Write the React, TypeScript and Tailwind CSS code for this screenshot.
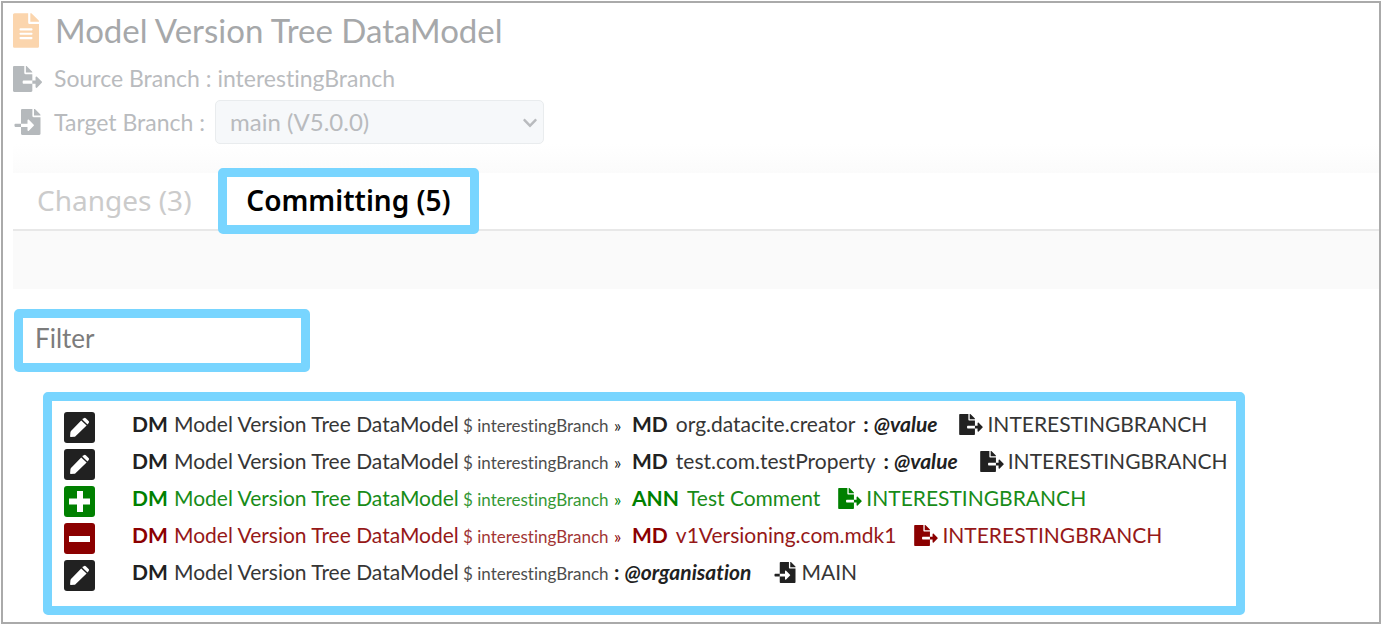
import { FaChevronDown, FaFileAlt, FaFileExport, FaFileImport } from "react-icons/fa";

type Kind = "edit" | "add" | "remove";

interface Change {
  kind: Kind;
  type?: string;
  label?: string;
  property?: string;
  branch: string;
  imported?: boolean;
}

const changes: Change[] = [
  { kind: "edit", type: "MD", label: "org.datacite.creator", property: "@value", branch: "INTERESTINGBRANCH" },
  { kind: "edit", type: "MD", label: "test.com.testProperty", property: "@value", branch: "INTERESTINGBRANCH" },
  { kind: "add", type: "ANN", label: "Test Comment", branch: "INTERESTINGBRANCH" },
  { kind: "remove", type: "MD", label: "v1Versioning.com.mdk1", branch: "INTERESTINGBRANCH" },
  { kind: "edit", property: "@organisation", branch: "MAIN", imported: true },
];

const colours: Record<Kind, string> = {
  edit: "text-[#212121]",
  add: "text-[#008000]",
  remove: "text-[#8b0000]",
};

function KindIcon({ kind }: { kind: Kind }) {
  return (
    <svg viewBox="0 0 31 31" className="size-[31px] shrink-0" role="img" aria-label={kind}>
      <rect width="31" height="31" rx="3" fill="currentColor" />
      {kind === "edit" && (
        <g fill="#fff">
          <path d="M17.2 8.4 22.6 13.5 11.5 24.2 Q11 24.7 10.3 24.7 L6.8 25 Q6 25 6.1 24.2 L6.4 20.4 Q6.4 19.7 7 19.1Z" />
          <path d="M18.3 7.5 19.8 6.2 Q20.9 5.4 22 6.4 L24.6 8.9 Q25.6 10 24.7 11.1 L23.5 12.5Z" />
        </g>
      )}
      {kind === "add" && <path fill="#fff" d="M13 5h6v7.5h7v6h-7V26h-6v-7.500H5v-6h8z" />}
      {kind === "remove" && <path fill="#fff" d="M5 13h21v6H5z" />}
    </svg>
  );
}

function ChangeRow({ change }: { change: Change }) {
  const Icon = change.imported ? FaFileImport : FaFileExport;
  return (
    <li className={`flex h-[37px] items-center text-[21px] leading-7 whitespace-nowrap ${colours[change.kind]}`}>
      <KindIcon kind={change.kind} />
      <div className="mb-[6px] ml-[37px] flex items-baseline">
        <span className="w-[42px] font-bold">DM</span>
        <span className="w-[289px] opacity-90">Model Version Tree DataModel</span>
        <span className="w-[151px] text-[17px] opacity-80">$ interestingBranch</span>
        {change.type && (
          <>
            <span className="w-[18px] text-[17px]">»</span>
            <span className="mr-2 font-bold">{change.type}</span>
            <span className="mr-2 opacity-90">{change.label}</span>
          </>
        )}
        {change.property && (
          <span className="mr-3 font-bold">
            : <i>{change.property}</i>
          </span>
        )}
        <span className="ml-[10px]">
          <Icon className="mr-1 mb-1 inline-block h-[21px] w-6 align-middle" />
          <span className="opacity-90">{change.branch}</span>
        </span>
      </div>
    </li>
  );
}

export default function App() {
  return (
    <div className="min-h-screen bg-white py-px pr-[2px] pl-px font-['Lato',sans-serif] [font-variant-ligatures:none]">
      <main className="flex min-h-[calc(100vh-2px)] flex-col border-2 border-[#aaaaaa] bg-white">
        <header className="pl-[10px] text-[23px] text-[#b9bbbe]">
          <div className="flex h-[54px] items-center gap-4">
            <FaFileAlt className="h-[35px] w-[26px] text-[#fbd5ad]" />
            <h1 className="text-[33px] leading-10 text-[#a6a8aa]">Model Version Tree DataModel</h1>
          </div>
          <div className="flex h-[43px] items-center gap-3">
            <FaFileExport className="h-[26px] w-[29px] text-[#b5b9bc]" />
            <p>Source Branch : interestingBranch</p>
          </div>
          <div className="flex h-11 items-center gap-3">
            <FaFileImport className="h-[26px] w-[29px] text-[#b5b9bc]" />
            <div className="flex items-center">
              <label htmlFor="target" className="w-[161px] whitespace-nowrap">Target Branch :</label>
              <div className="relative w-[329px]">
                <select
                  id="target"
                  className="h-11 w-full appearance-none rounded-[5px] border border-[#e9ecee] bg-[#f6f8fa] px-[14px] text-[24px]"
                >
                  <option>main (V5.0.0)</option>
                </select>
                <FaChevronDown className="pointer-events-none absolute top-[15px] right-[6px] size-4" />
              </div>
            </div>
          </div>
        </header>

        <div className="ml-[10px] h-[29px] bg-linear-to-b from-white to-[#fbfbfb]" />

        <nav
          className="relative z-10 ml-[10px] flex h-[58px] items-center border-b-2 border-[#e8e8e8] font-['Noto_Sans',sans-serif] text-[28px]"
          role="tablist"
        >
          <button role="tab" className="w-[205px] pb-[2px] pl-6 text-left text-[#cbcbcb]">Changes (3)</button>
          <button
            role="tab"
            aria-selected="true"
            className="h-[66px] w-[261px] shrink-0 rounded-[5px] border-[9px] border-[#78d5ff] bg-white pb-[2px] font-semibold text-black"
          >
            Committing (5)
          </button>
        </nav>

        <div className="ml-[10px] h-[58px] bg-[#fafafa]" />

        <section className="pt-5 pl-[11px]">
          <input
            type="text"
            placeholder="Filter"
            aria-label="Filter"
            className="block h-[63px] w-[296px] rounded-[5px] border-[9px] border-[#78d5ff] px-3 pb-[6px] text-[26px] text-[#333333] placeholder:text-[#7c7c7c]"
          />
          <ul className="mt-5 ml-[29px] h-[223px] w-fit min-w-[1202px] rounded-[5px] border-[9px] border-[#78d5ff] pt-2 pl-3">
            {changes.map((change, index) => (
              <ChangeRow key={index} change={change} />
            ))}
          </ul>
        </section>
      </main>
    </div>
  );
}
